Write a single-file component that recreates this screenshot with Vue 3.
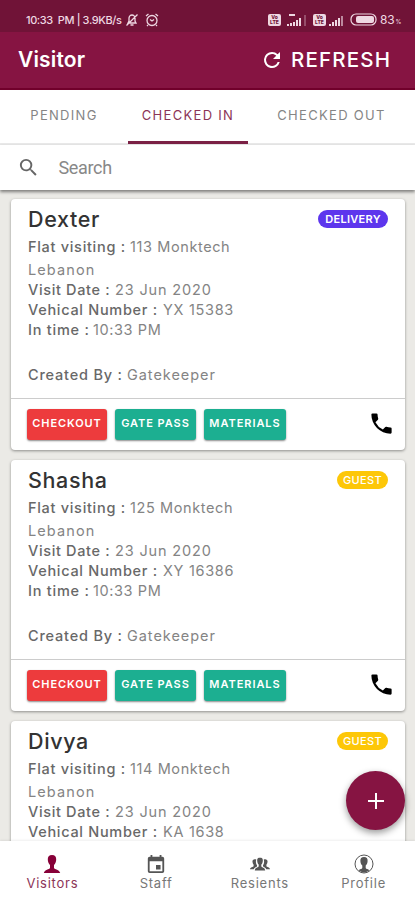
<script setup>
const visitors = [
  { name: 'Dexter', type: 'DELIVERY', flat: '113 Monktech', vehicle: 'YX 15383' },
  { name: 'Shasha', type: 'GUEST', flat: '125 Monktech', vehicle: 'XY 16386' },
  { name: 'Divya', type: 'GUEST', flat: '114 Monktech', vehicle: 'KA 1638' }
]
</script>

<template>
  <div class="screen">
    <header>
      <div class="status">
        <span class="clock">10:33&nbsp; PM | 3.9KB/s</span>
        <svg class="mute" width="14" height="14" viewBox="0 0 14 14"><path d="M3 10h8L10 8V5a3 3 0 0 0-6 0v3zM5.500 12h3M1.500 12.500l11-11" /></svg>
        <svg class="alarm" width="14" height="14" viewBox="0 0 14 14"><circle cx="7" cy="7.500" r="5" /><path d="M1 3l2.500-2M13 3l-2.500-2M5 6.500l2 1.500 2-1.500M3 12l-1 1M11 12l1 1" /></svg>
        <span class="grow"></span>
        <span class="volte"><i>Vo</i><i>LTE</i></span>
        <svg class="signal first" width="20" height="14" viewBox="0 0 20 14"><path d="M0 13h2v-2H0zM3 13h2v-3H3zM6 13h2V9H6zM9 13h2V7H9zM12 13h2V5h-2zM2 1h6v2H2z" /><path class="dim" d="M17 13h2V2h-2z" /></svg>
        <span class="volte"><i>Vo</i><i>LTE</i></span>
        <svg class="signal second" width="15" height="14" viewBox="0 0 15 14"><path d="M0 13h2v-2H0zM3 13h2v-4H3zM6 13h2V7H6zM9 13h2V5H9z" /><path class="mid" d="M12 13h2V3h-2z" /></svg>
        <svg class="battery" width="27" height="13" viewBox="0 0 27 13"><rect x="1" y="1" width="25" height="11" rx="5" class="shell" /><rect x="6" y="3" width="18" height="7" rx="2" class="charge" /></svg>
        <span class="percent">83<small>%</small></span>
      </div>
      <div class="bar">
        <h1>Visitor</h1>
        <button class="refresh">
          <svg width="24" height="24" viewBox="0 0 24 24"><path d="M17.650 6.350A7.960 7.960 0 0 0 12 4a8 8 0 1 0 7.730 10h-2.080A6 6 0 1 1 12 6c1.660 0 3.140.69 4.220 1.780L13 11h7V4z" /></svg>
          <span>REFRESH</span>
        </button>
      </div>
    </header>

    <nav class="tabs">
      <div class="tab pending"><span>PENDING</span></div>
      <div class="tab active"><span>CHECKED IN</span></div>
      <div class="tab out"><span>CHECKED OUT</span></div>
    </nav>

    <div class="search">
      <svg width="24" height="24" viewBox="0 0 24 24"><path d="M15.500 14h-.79l-.28-.27A6.470 6.470 0 0 0 16 9.500 6.500 6.500 0 1 0 9.500 16c1.610 0 3.090-.59 4.230-1.570l.27.28v.79l5 4.990L20.490 19zm-6 0a4.500 4.500 0 1 1 0-9 4.500 4.500 0 0 1 0 9z" /></svg>
      <span>Search</span>
    </div>

    <main>
      <article v-for="v in visitors" :key="v.name" class="card">
        <div class="details">
          <div class="title">
            <h2>{{ v.name }}</h2>
            <span class="badge" :class="v.type.toLowerCase()">{{ v.type }}</span>
          </div>
          <p class="flat"><b class="l-flat">Flat visiting :</b><span class="v-flat">{{ v.flat }}</span></p>
          <p class="town"><span>Lebanon</span></p>
          <p><b class="l-date">Visit Date :</b><span class="v-date">23 Jun 2020</span></p>
          <p><b class="l-vehicle">Vehical Number :</b><span class="v-vehicle">{{ v.vehicle }}</span></p>
          <p><b class="l-time">In time :</b><span class="v-time">10:33 PM</span></p>
          <p class="created"><b class="l-created">Created By :</b><span class="v-created">Gatekeeper</span></p>
        </div>
        <div class="actions">
          <button class="checkout">CHECKOUT</button>
          <button class="pass">GATE PASS</button>
          <button class="materials">MATERIALS</button>
          <svg class="phone" width="27" height="27" viewBox="0 0 24 24"><path d="M6.620 10.790a15.150 15.150 0 0 0 6.590 6.590l2.200-2.200a1 1 0 0 1 1.020-.24c1.120.37 2.330.57 3.570.57a1 1 0 0 1 1 1V20a1 1 0 0 1-1 1A17 17 0 0 1 3 4a1 1 0 0 1 1-1h3.500a1 1 0 0 1 1 1c0 1.250.2 2.450.57 3.570a1 1 0 0 1-.25 1.020z" /></svg>
        </div>
      </article>
    </main>

    <button class="fab" aria-label="Add">
      <svg width="18" height="18" viewBox="0 0 18 18"><path d="M9 1v16M1 9h16" /></svg>
    </button>

    <footer>
      <div class="item current">
        <svg width="20" height="20" viewBox="0 0 20 20"><path d="M10 1c-3 0-4.400 2-4.200 4.700.1 2 .9 4 2.200 5.300v3c-.5 1.500-5.500 1.700-6.200 5h16.400c-.7-3.300-5.700-3.500-6.200-5v-3c1.300-1.300 2.100-3.300 2.200-5.300C14.400 3 13 1 10 1z" /></svg>
        <span>Visitors</span>
      </div>
      <div class="item staff">
        <svg viewBox="2 0 20 22"><path d="M17 12h-5v5h5zM16 1v2H8V1H6v2H5a2 2 0 0 0-2 2v14a2 2 0 0 0 2 2h14a2 2 0 0 0 2-2V5a2 2 0 0 0-2-2h-1V1zm3 18H5V8h14z" /></svg>
        <span>Staff</span>
      </div>
      <div class="item residents">
        <svg width="20" height="20" viewBox="0 0 20 20"><path d="M10 3.500c-2 0-3 1.300-2.800 3.200.1 1.600.6 3 1.500 3.900v2C8.200 13.600 5 13.500 4.800 16.500h10.400c-.2-3-3.400-2.900-3.900-3.900v-2c.9-.9 1.400-2.300 1.500-3.900.2-1.900-.8-3.200-2.800-3.200zM6.300 5.500C3.800 4.500 2.200 5.800 2.500 8c.1 1.200.5 2.200 1.100 2.800v1.400C3.200 13.200.3 13 0 15.300h3.800c.4-1.500 1.800-2 3.200-2.800v-1.200C6 9.800 5.500 7.500 6.300 5.500zM13.700 5.500c2.500-1 4.100.3 3.800 2.500-.1 1.200-.5 2.200-1.100 2.800v1.400c.4 1 3.300.8 3.600 3.100h-3.800c-.4-1.500-1.800-2-3.200-2.800v-1.200c1-1.500 1.500-3.800.7-5.800z" /></svg>
        <span>Resients</span>
      </div>
      <div class="item profile">
        <svg width="20" height="20" viewBox="0 0 20 20"><circle cx="10" cy="10" r="9" /><path d="M10 3c-2.600 0-3.800 1.500-3.600 3.900.1 2 .8 3.700 1.900 4.700v2.300c-.3 1-2.600 1.200-3.600 2.300C6.200 17.600 8 18.400 10 18.400s3.800-.8 5.300-2.200c-1-1.100-3.300-1.300-3.600-2.300v-2.300c1.100-1 1.800-2.700 1.900-4.700C13.800 4.500 12.600 3 10 3z" /></svg>
        <span>Profile</span>
      </div>
    </footer>
  </div>
</template>

<style>
body { margin: 0; overflow: hidden; }
</style>

<style scoped>
.screen { position: relative; width: 415px; height: 900px; display: flex; flex-direction: column; overflow: hidden; background: #ebeae6; font-family: Inter, "Open Sans", sans-serif; color: #777; }
h1, h2, p { margin: 0; }
button { border: 0; padding: 0; font-family: inherit; color: #fff; }
svg { flex: none; fill: currentColor; }
header { flex: none; height: 90px; box-sizing: border-box; border-bottom: 2px solid #71002b; background: #861442; color: #fff; }
.status { height: 32px; background: #701337; display: flex; align-items: center; padding: 7px 14px 0 26px; box-sizing: border-box; color: #eed8e2; }
.clock { width: 99px; font-size: 11px; font-weight: 500; letter-spacing: -.4px; white-space: nowrap; }
.mute, .alarm { fill: none; stroke: currentColor; stroke-width: 1.3; }
.alarm { margin-left: 6px; }
.grow { flex: 1; }
.volte { flex: none; width: 13px; height: 12px; display: flex; flex-direction: column; align-items: center; justify-content: center; border-radius: 2px; background: #eed8e2; color: #701337; font-size: 5px; line-height: 5px; font-weight: 800; }
.volte i { font-style: normal; }
.signal.first { margin: 0 6px; }
.signal.second { margin-left: 3px; }
.dim { opacity: .3; }
.mid { opacity: .6; }
.battery { margin-left: 6px; }
.shell { fill: none; stroke: currentColor; stroke-width: 1.2; }
.percent { margin-left: 3px; width: 21px; font-size: 12px; letter-spacing: -.2px; white-space: nowrap; }
.percent small { font-size: 6px; margin-left: 1px; }
.bar { height: 56px; display: flex; justify-content: space-between; align-items: center; padding: 0 24px 2px 18px; box-sizing: border-box; }
h1 { font-size: 21px; font-weight: 600; letter-spacing: .15px; }
.refresh { display: flex; align-items: center; gap: 7px; background: none; font-size: 20.500px; font-weight: 500; letter-spacing: 1.2px; }
.refresh span { width: 100px; text-align: left; white-space: nowrap; }
.refresh svg { position: relative; top: 1px; }
.tabs { flex: none; height: 55px; box-sizing: border-box; display: flex; background: #fff; border-bottom: 2px solid #e9e9e9; font-size: 13px; color: #858585; }
.tab { height: 54px; box-sizing: border-box; display: flex; align-items: center; justify-content: center; padding-bottom: 4px; letter-spacing: 1.3px; white-space: nowrap; }
.pending { width: 128px; }
.active { width: 120px; border-bottom: 3px solid #7b2145; color: #8c3457; padding-bottom: 1px; }
.out { width: 167px; }
.search { flex: none; z-index: 1; height: 45px; background: #fff; display: flex; align-items: center; padding: 0 17px; box-shadow: 0 2px 3px #0007; font: 18px Roboto, sans-serif; color: #888; }
.search svg { width: 23px; height: 23px; color: #666; }
.search span { margin-left: 18.500px; letter-spacing: -.35px; }
main { height: 651px; overflow: hidden; padding: 9px 10px 0 11px; box-sizing: border-box; }
.card { height: 251px; margin-bottom: 10px; border-radius: 4px; background: #fff; box-shadow: 0 1px 3px #0006; overflow: hidden; }
.details { height: 200px; box-sizing: border-box; padding: 7px 17px 0; border-bottom: 1px solid #ccc; }
.title { display: flex; justify-content: space-between; height: 29px; }
h2 { font-size: 21.500px; line-height: 27px; font-weight: 500; letter-spacing: .65px; color: #333; }
.badge { margin-top: 4px; height: 18px; border-radius: 9px; font-size: 11px; line-height: 19px; letter-spacing: .3px; color: #fff; text-align: center; font-weight: 500; }
.delivery { width: 70px; background: #5d36ed; font-weight: 600; }
.guest { width: 51px; background: #fdc708; }
p { height: 20px; font-size: 14.500px; line-height: 20px; white-space: nowrap; color: #848484; display: flex; font-weight: 400; }
b { font-weight: 500; color: #686868; }
.flat { height: 25px; line-height: 24px; }
.town { height: 20px; line-height: 20px; letter-spacing: 1.1px; }
.l-flat { width: 102px; letter-spacing: .7px; }
.v-flat { letter-spacing: .6px; }
.l-date { width: 87px; letter-spacing: .65px; }
.v-date { letter-spacing: .85px; }
.l-vehicle { width: 135px; letter-spacing: .7px; }
.v-vehicle { letter-spacing: .7px; }
.l-time { width: 65px; letter-spacing: .75px; }
.v-time { letter-spacing: .6px; }
.l-created { width: 99px; letter-spacing: .8px; }
.v-created { letter-spacing: .95px; }
.created { margin-top: 25px; }
.actions { height: 51px; box-sizing: border-box; display: flex; align-items: flex-start; padding: 10px 10px 0 16px; }
.actions button { height: 31px; border-radius: 3px; background: #1caf91; box-shadow: 0 1px 2px #0007; font-size: 11px; line-height: 28px; padding-bottom: 3px; font-weight: 600; letter-spacing: .95px; white-space: nowrap; }
.actions .checkout { width: 80px; background: #ed3b3d; letter-spacing: .9px; }
.pass { width: 81px; margin-left: 8px; }
.materials { width: 82px; margin-left: 8px; }
.phone { color: #000; margin: 1px 0 0 auto; }
.fab { position: absolute; left: 346px; top: 771px; width: 59px; height: 59px; border-radius: 50%; background: #861442; display: grid; place-items: center; box-shadow: 0 3px 7px #0006; }
.fab path { stroke: #fff; stroke-width: 2; }
footer { flex: none; height: 59px; display: flex; background: #fff; box-shadow: 0 -1px 2px #0001; color: #555; z-index: 1; }
.item { width: 103.750px; display: flex; flex-direction: column; align-items: center; padding: 13px 0 0 1px; box-sizing: border-box; font-size: 13px; line-height: 16px; letter-spacing: .75px; }
.item svg { width: 20px; height: 20px; }
.item span { margin-top: 1px; color: #777; }
.current { color: #870038; }
.current span { color: #8c3457; }
.profile circle { fill: none; stroke: currentColor; }
</style>
